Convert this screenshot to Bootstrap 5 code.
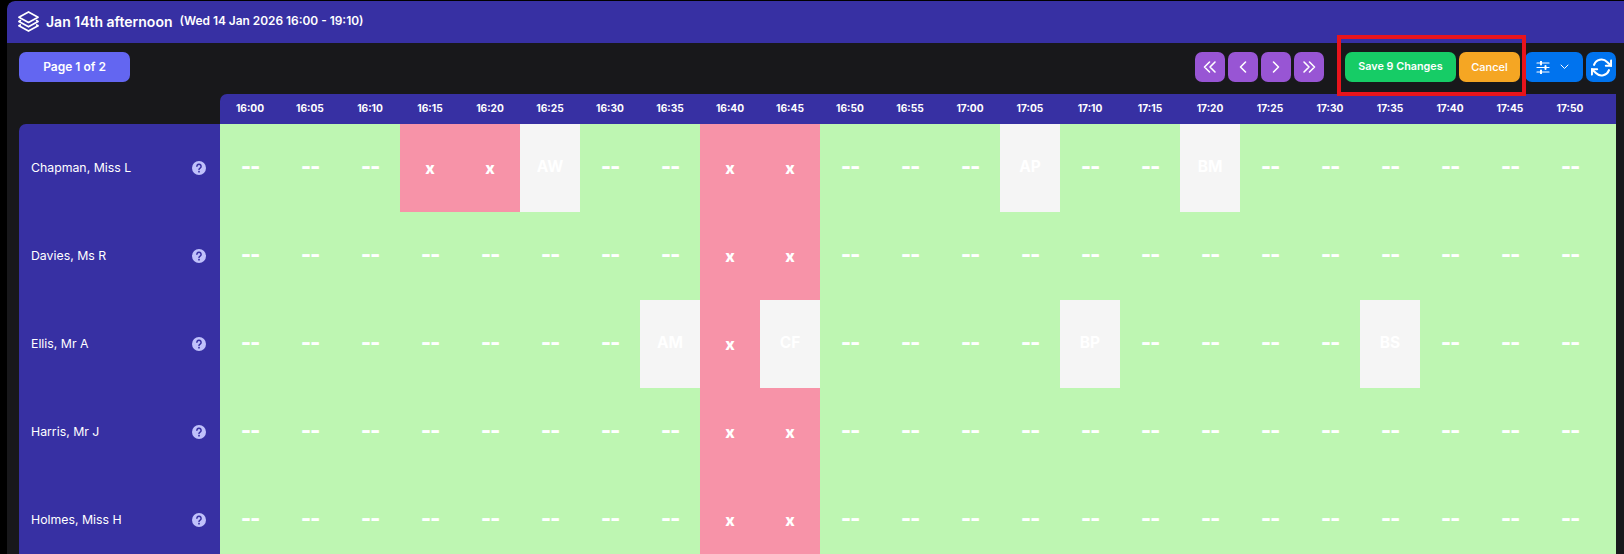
<!DOCTYPE html>
<html lang="en">
<head>
  <meta charset="UTF-8" />
  <title>Jan 14th afternoon</title>
  <meta name="viewport" content="width=device-width, initial-scale=1">
  <link href="https://cdn.jsdelivr.net/npm/bootstrap@5.3.3/dist/css/bootstrap.min.css" rel="stylesheet">
  <style>
    html, body { height: 100%; overflow: hidden; background: #000; }
    body { font-family: Inter, "Liberation Sans", sans-serif; padding: 1px 0 0 7px; }
    .sheet { background: #18181b; border-radius: 8px 0 0 0; height: 100%; overflow: hidden; position: relative; }
    .title-bar { height: 42px; background: #3730a3; color: #fff; padding: 0 0 2px 10px; border-radius: 8px 0 0 0; }
    .title-main { font-size: 14px; font-weight: 600; margin-left: 6px; }
    .title-sub { font-size: 11.900px; font-weight: 600; margin-left: 7px; }
    .tool-bar { height: 51px; padding: 9px 8px 0 12px; }
    .tool-btn { height: 30px; border: 0; border-radius: 7px; color: #fff; padding: 0; font-size: 11px; font-weight: 600; display: flex; align-items: center; justify-content: center; }
    .tool-btn:hover, .tool-btn:active { color: #fff; }
    .btn-page { width: 111px; background: #6366f1; font-size: 12px; }
    .nav-group { gap: 3px; }
    .btn-nav { width: 30px; background: #9855d4; }
    .btn-save { width: 111px; background: #16cc66; font-size: 10.800px; margin-left: 21px; }
    .btn-cancel { width: 61px; background: #f5a623; font-weight: 500; margin-left: 3px; }
    .btn-blue { background: #0073ee; }
    .btn-filter { width: 58px; margin-left: 5px; gap: 10px; padding-right: 4px; }
    .btn-sync { width: 30px; margin-left: 3px; }
    .time-head { margin-left: 213px; margin-right: 8px; height: 30px; background: #3730a3; border-radius: 7px 0 0 0; color: #fff; }
    .slot-label { width: 60px; text-align: center; font-size: 10.200px; font-weight: 700; }
    .row-name { width: 201px; margin-left: 12px; background: #3730a3; color: #fff; padding: 0 12px; font-size: 12.300px; flex-shrink: 0; }
    .first-name { border-radius: 7px 0 0 0; }
    .help-dot { margin-right: 2px; }
    .slots { flex: 1; background: #bef6b2; margin-right: 8px; }
    .slot { width: 60px; height: 88px; color: #fff; font-weight: 700; font-size: 13px; }
    .slot-free { font-size: 22px; font-weight: 800; letter-spacing: -1px; padding-bottom: 3px; }
    .slot-off { background: #f793a8; font-size: 16px; font-weight: 800; }
    .slot-booked { background: #f5f5f5; font-size: 15.500px; padding-bottom: 2px; }
    .annot-box { position: absolute; left: 1330px; top: 34px; width: 189px; height: 61px; border: 4px solid #e8141c; pointer-events: none; }
  </style>
</head>
<body>
  <div class="sheet">
    <div class="title-bar d-flex align-items-center">
      <svg width="23" height="23" viewBox="0 0 24 24" fill="none" stroke="#fff" stroke-width="1.800" stroke-linejoin="round" stroke-linecap="round">
        <path d="M12 2 22 7.500 12 13 2 7.500Z"/>
        <path d="M3.500 11 2 12l10 5.500L22 12l-1.500-1"/>
        <path d="M3.500 15.500 2 16.500l10 5.500 10-5.500-1.500-1"/>
      </svg>
      <span class="title-main">Jan 14th afternoon</span>
      <span class="title-sub">(Wed 14 Jan 2026 16:00 - 19:10)</span>
    </div>

    <div class="tool-bar d-flex align-items-start">
      <button class="btn tool-btn btn-page">Page 1 of 2</button>
      <div class="ms-auto d-flex nav-group">
        <button class="btn tool-btn btn-nav" aria-label="First">
          <svg width="16" height="16" viewBox="0 0 16 16" fill="none" stroke="#fff" stroke-width="1.600" stroke-linecap="round" stroke-linejoin="round"><path d="M7.500 3 2.500 8l5 5M13 3 8 8l5 5"/></svg>
        </button>
        <button class="btn tool-btn btn-nav" aria-label="Previous">
          <svg width="16" height="16" viewBox="0 0 16 16" fill="none" stroke="#fff" stroke-width="1.600" stroke-linecap="round" stroke-linejoin="round"><path d="M10.500 3 5.500 8l5 5"/></svg>
        </button>
        <button class="btn tool-btn btn-nav" aria-label="Next">
          <svg width="16" height="16" viewBox="0 0 16 16" fill="none" stroke="#fff" stroke-width="1.600" stroke-linecap="round" stroke-linejoin="round"><path d="M5.500 3l5 5-5 5"/></svg>
        </button>
        <button class="btn tool-btn btn-nav" aria-label="Last">
          <svg width="16" height="16" viewBox="0 0 16 16" fill="none" stroke="#fff" stroke-width="1.600" stroke-linecap="round" stroke-linejoin="round"><path d="M3 3l5 5-5 5M8.500 3l5 5-5 5"/></svg>
        </button>
      </div>
      <button class="btn tool-btn btn-save">Save 9 Changes</button>
      <button class="btn tool-btn btn-cancel">Cancel</button>
      <button class="btn tool-btn btn-blue btn-filter" aria-label="Options">
        <svg width="14" height="13" viewBox="0 0 14 13" fill="none" stroke="#fff" stroke-width="1.200" stroke-linecap="round"><path d="M1 2h12M1 6.500h12M1 11h12"/><path d="M5 .6v2.800M9.500 5.100v2.800M5 9.600v2.800" stroke-width="2"/></svg>
        <svg width="9" height="6" viewBox="0 0 9 6" fill="none" stroke="#fff" stroke-width="1" stroke-linecap="round" stroke-linejoin="round"><path d="M1 1l3.500 3.500L8 1"/></svg>
      </button>
      <button class="btn tool-btn btn-blue btn-sync" aria-label="Refresh">
        <svg width="21" height="21" viewBox="0 0 24 24" fill="none" stroke="#fff" stroke-width="2.400" stroke-linecap="round" stroke-linejoin="round"><path d="M23 4v6h-6"/><path d="M1 20v-6h6"/><path d="M3.500 9a9 9 0 0 1 14.900-3.400L23 10M1 14l4.600 4.400A9 9 0 0 0 20.500 15"/></svg>
      </button>
    </div>

    <div class="time-head d-flex align-items-center" id="timeHead"></div>
    <div id="rows"></div>

    <div class="annot-box"></div>
  </div>

  <script>
    const times = [];
    for (let m = 0; m < 115; m += 5) {
      const h = 16 + Math.floor(m / 60);
      times.push(h + ":" + String(m % 60).padStart(2, "0"));
    }

    const teachers = [
      { name: "Chapman, Miss L", slots: { "16:15": "x", "16:20": "x", "16:25": "AW", "16:40": "x", "16:45": "x", "17:05": "AP", "17:20": "BM" } },
      { name: "Davies, Ms R", slots: { "16:40": "x", "16:45": "x" } },
      { name: "Ellis, Mr A", slots: { "16:35": "AM", "16:40": "x", "16:45": "CF", "17:10": "BP", "17:35": "BS" } },
      { name: "Harris, Mr J", slots: { "16:40": "x", "16:45": "x" } },
      { name: "Holmes, Miss H", slots: { "16:40": "x", "16:45": "x" } }
    ];

    const helpIcon = '<svg class="help-dot" width="14" height="14" viewBox="0 0 14 14"><circle cx="7" cy="7" r="7" fill="#c0c1fb"/><path d="M4.900 5.300a2.100 2.100 0 1 1 3.200 1.800c-.8.500-1.100.8-1.100 1.500" fill="none" stroke="#3730a3" stroke-width="1.500" stroke-linecap="round"/><circle cx="7" cy="10.700" r=".9" fill="#3730a3"/></svg>';

    document.getElementById("timeHead").innerHTML = times
      .map(t => '<div class="slot-label">' + t + "</div>").join("");

    document.getElementById("rows").innerHTML = teachers.map((t, i) => {
      const cells = times.map(time => {
        const val = t.slots[time];
        const cls = !val ? "slot-free" : val === "x" ? "slot-off" : "slot-booked";
        return '<div class="slot ' + cls + ' d-flex align-items-center justify-content-center">' + (val || "--") + "</div>";
      }).join("");
      return '<div class="d-flex"><div class="row-name d-flex align-items-center justify-content-between' + (i === 0 ? " first-name" : "") + '"><span>' + t.name + "</span>" + helpIcon + '</div><div class="slots d-flex">' + cells + "</div></div>";
    }).join("");
  </script>
  <script src="https://cdn.jsdelivr.net/npm/bootstrap@5.3.3/dist/js/bootstrap.bundle.min.js"></script>
</body>
</html>
